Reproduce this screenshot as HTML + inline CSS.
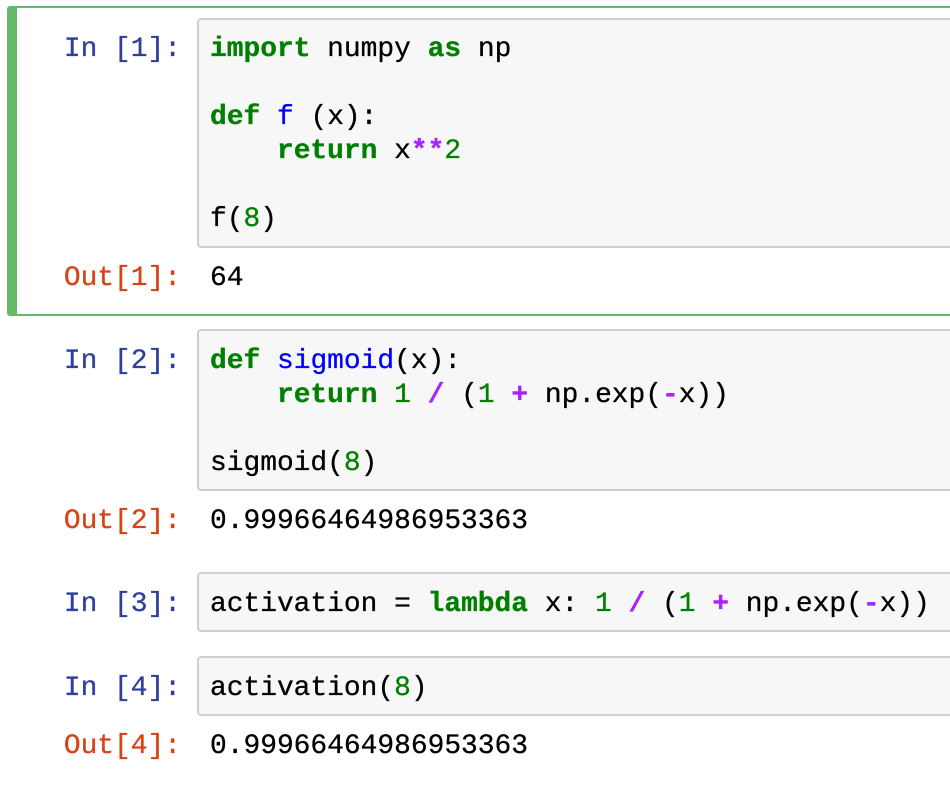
<!DOCTYPE html>
<html><head><meta charset="utf-8"><style>
html,body{margin:0;padding:0;background:#fff;width:950px;height:792px;overflow:hidden;position:relative}
.mono{font-family:"Liberation Mono",monospace;font-size:27.9px;line-height:34px;white-space:pre;position:absolute;-webkit-text-stroke:0.3px currentColor}
.sel{position:absolute;left:7px;top:6px;width:960px;height:306px;border:2px solid #66bb6a;border-left:10px solid #66bb6a;border-radius:3px}
.box{position:absolute;left:197px;width:780px;background:#f7f7f7;border:2px solid #cfcfcf;border-radius:4px}
.pin{color:#303f9f;right:769px;text-align:right}
.pout{color:#d84315;right:769px;text-align:right}
.k{color:#008000;font-weight:bold}
.n{color:#008000}
.f{color:#0000ff}
.o{color:#aa22ff;font-weight:bold}
</style></head><body>
<div class="sel"></div>
<div class="box" style="top:18px;height:226px"></div>
<div class="box" style="top:329px;height:158px"></div>
<div class="box" style="top:572px;height:56px"></div>
<div class="box" style="top:656px;height:56px"></div>

<div class="mono pin" style="top:33px">In [1]:</div>
<div class="mono" style="left:210px;top:33px"><span class="k">import</span> numpy <span class="k">as</span> np

<span class="k">def</span> <span class="f">f</span> (x):
    <span class="k">return</span> x<span class="o">**</span><span class="n">2</span>

f(<span class="n">8</span>)</div>
<div class="mono pout" style="top:262px">Out[1]:</div>
<div class="mono" style="left:210px;top:262px">64</div>

<div class="mono pin" style="top:345px">In [2]:</div>
<div class="mono" style="left:210px;top:345px"><span class="k">def</span> <span class="f">sigmoid</span>(x):
    <span class="k">return</span> <span class="n">1</span> <span class="o">/</span> (<span class="n">1</span> <span class="o">+</span> np.exp(<span class="o">-</span>x))

sigmoid(<span class="n">8</span>)</div>
<div class="mono pout" style="top:505px">Out[2]:</div>
<div class="mono" style="left:210px;top:505px">0.99966464986953363</div>

<div class="mono pin" style="top:588px">In [3]:</div>
<div class="mono" style="left:210px;top:588px">activation = <span class="k">lambda</span> x: <span class="n">1</span> <span class="o">/</span> (<span class="n">1</span> <span class="o">+</span> np.exp(<span class="o">-</span>x))</div>

<div class="mono pin" style="top:672px">In [4]:</div>
<div class="mono" style="left:210px;top:672px">activation(<span class="n">8</span>)</div>
<div class="mono pout" style="top:730px">Out[4]:</div>
<div class="mono" style="left:210px;top:730px">0.99966464986953363</div>
</body></html>
